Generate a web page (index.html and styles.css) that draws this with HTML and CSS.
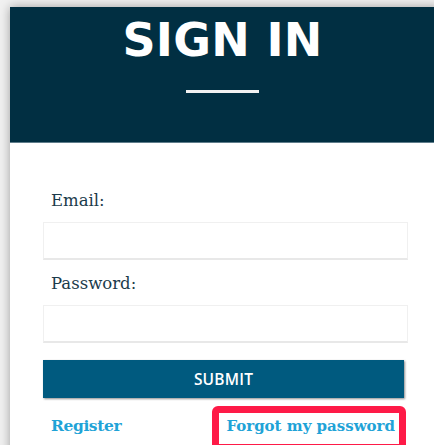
FILE: index.html
```html
<!DOCTYPE html>
<html lang="en">
<head>
<meta charset="utf-8">
<title>Sign in</title>
<link rel="stylesheet" href="styles.css">
</head>
<body>
  <main class="card">
    <header class="card-head">
      <h1 class="title">SIGN IN</h1>
      <span class="rule"></span>
    </header>
    <form class="card-body" action="#" onsubmit="return false">
      <div class="field">
        <label class="label" for="email">Email:</label>
        <input class="input" id="email" type="email">
      </div>
      <div class="field">
        <label class="label" for="password">Password:</label>
        <input class="input" id="password" type="password">
      </div>
      <button class="submit" type="submit">SUBMIT</button>
      <div class="links">
        <a class="link link-register" href="#">Register</a>
        <a class="link link-forgot" href="#">Forgot my password</a>
      </div>
    </form>
  </main>
</body>
</html>
```
FILE: styles.css
```css
html {
  overflow: hidden;
}

body {
  margin: 0;
  background: #f1f1f1;
  font-family: "DejaVu Serif", serif;
}

.card {
  margin: 7px 0 0 10px;
  width: 431px;
  background: #fff;
  box-shadow: 0 0 10px rgba(0, 0, 0, 0.35);
}

.card-head {
  background: #012f42;
  border-bottom: 1px solid #5f7d8b;
  padding: 10px 0 49px;
  display: flex;
  flex-direction: column;
  align-items: center;
}

.title {
  margin: 0 6px 0 0;
  font-family: "DejaVu Sans", sans-serif;
  font-weight: 700;
  font-size: 46px;
  line-height: 46px;
  letter-spacing: 0.3px;
  color: #fff;
}

.rule {
  display: block;
  width: 73px;
  height: 3px;
  margin: 27px 6px 0 0;
  background: #f2f2f2;
}

.card-body {
  padding: 46px 33px 40px;
  display: flex;
  flex-direction: column;
}

.field {
  display: flex;
  flex-direction: column;
  margin-bottom: 12px;
}

.label {
  font-size: 16.5px;
  line-height: 24px;
  color: #1b3b4b;
  padding-left: 8px;
  margin-bottom: 9px;
}

.input {
  box-sizing: border-box;
  height: 38px;
  margin: 0;
  border: 1px solid #f0f0f0;
  border-bottom: 2px solid #e8e8e8;
  background: #fff;
  outline: none;
}

.submit {
  margin-top: 5px;
  width: calc(100% - 4px);
  height: 38px;
  border: none;
  background: #005a7f;
  box-shadow: 1px 1px 2px rgba(0, 0, 0, 0.45);
  color: #fff;
  font-family: "Open Sans", sans-serif;
  font-weight: 600;
  font-size: 15.5px;
  letter-spacing: 0.2px;
  padding: 0;
  cursor: pointer;
}

.links {
  margin-top: 8px;
  display: flex;
  justify-content: space-between;
  align-items: baseline;
  padding: 0 2px 0 8px;
}

.link {
  color: #1fa3d7;
  font-weight: 700;
  font-size: 15px;
  line-height: 20px;
  text-decoration: none;
}

.link-register {
  font-size: 15.5px;
  letter-spacing: -0.4px;
}

.link-forgot {
  border: 7px solid #fe1a47;
  border-radius: 6px;
  padding: 3px 4px 8px 7px;
}
```
